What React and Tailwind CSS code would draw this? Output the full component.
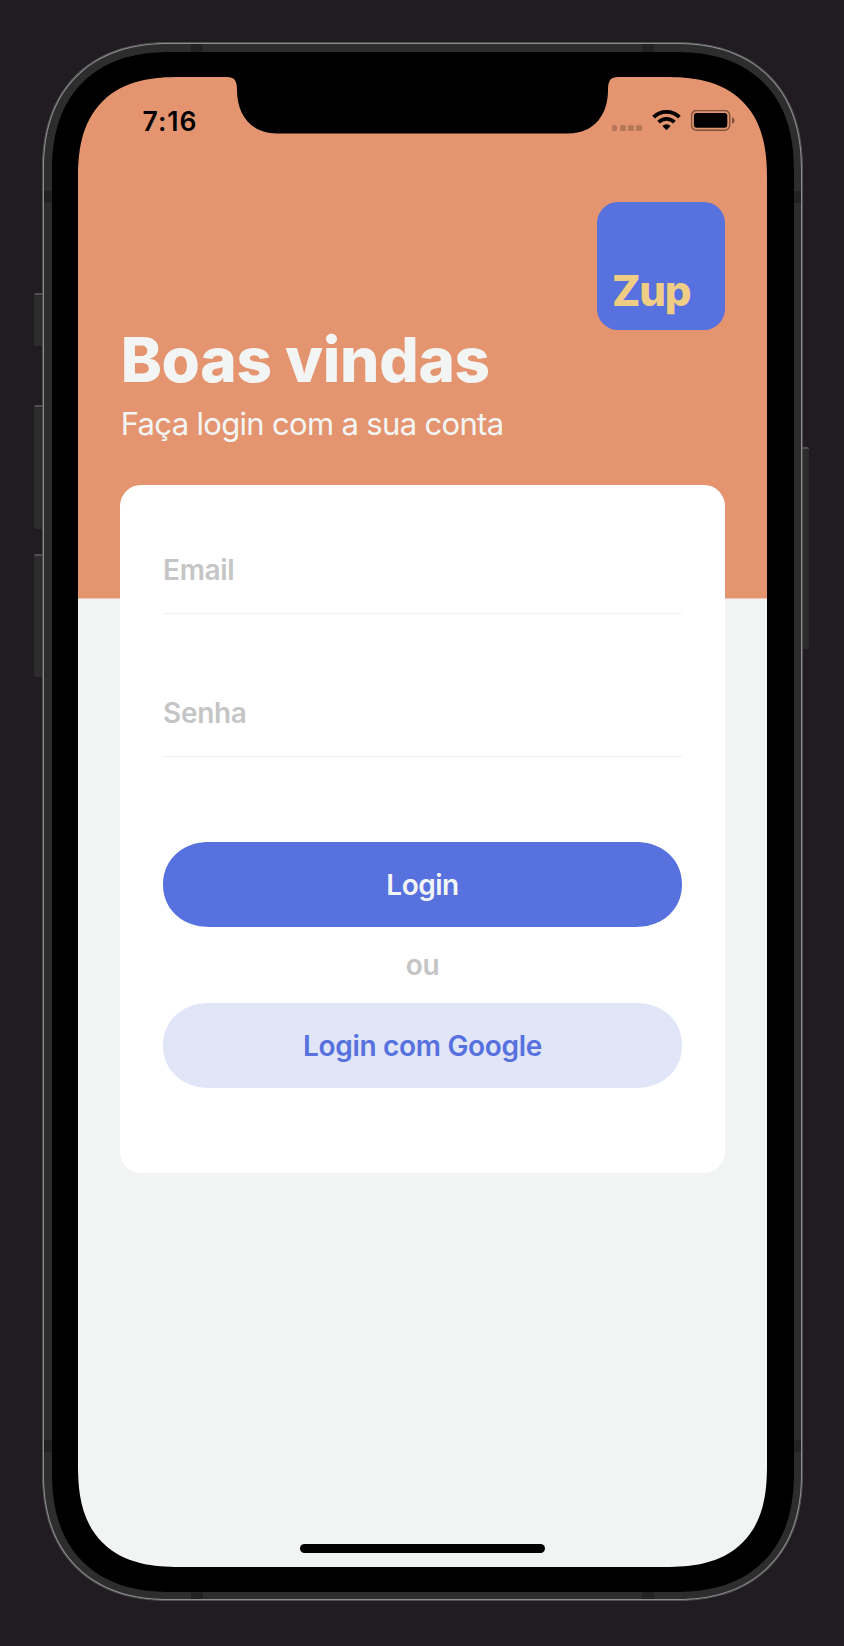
import React from "react";

function StatusBar() {
  return (
    <div className="flex h-[54px] items-end justify-between pl-[64.5px] pr-[32px]">
      <span className="text-[26.5px] leading-[32px] font-semibold text-black tracking-[1px] mb-[-6px]">7:16</span>
      <div className="flex items-end">
        <div className="flex gap-[2.6px] mr-[10px]">
          <i className="size-[5.6px] rounded-[1.5px] bg-black/20" />
          <i className="size-[5.6px] rounded-[1.5px] bg-black/20" />
          <i className="size-[5.6px] rounded-[1.5px] bg-black/20" />
          <i className="size-[5.6px] rounded-[1.5px] bg-black/20" />
        </div>
        <svg width="29" height="22" viewBox="0 0 29 22" className="mr-[10px]" fill="none" stroke="#000" strokeWidth="3.8">
          <path d="M1.6 8.2a18.2 18.2 0 0 1 25.8 0" />
          <path d="M6.6 13.2a11.2 11.2 0 0 1 15.8 0" />
          <path d="M10.4 16.9a6.2 6.2 0 0 1 8.2 0L14.5 21.2Z" fill="#000" stroke="none" />
        </svg>
        <svg width="44" height="21" viewBox="0 0 44 21">
          <rect x="0.5" y="0.5" width="38.2" height="19.8" rx="5" fill="none" stroke="#000" strokeOpacity=".45" strokeWidth="1.4" />
          <rect x="2.9" y="3" width="33.4" height="14.8" rx="2.8" fill="#000" />
          <path d="M41 7.2c3.4 1.2 3.4 5.4 0 6.6Z" fill="#000" fillOpacity=".45" />
        </svg>
      </div>
    </div>
  );
}

function Field({ label }) {
  return (
    <label className="block border-b border-[#f1f1f1] pb-[26px] text-[28px] leading-[34px] font-semibold tracking-[-0.3px] text-[#c5c5c6]">
      {label}
    </label>
  );
}

function LoginCard() {
  return (
    <form className="flex h-[688px] flex-col rounded-[21px] bg-white px-[43px] pt-[68px]">
      <div className="flex flex-col gap-[82px]">
        <Field label="Email" />
        <Field label="Senha" />
      </div>
      <div className="mt-[85px] flex flex-col gap-[21px]">
        <button type="button" className="h-[85px] rounded-[46px/42.5px] [corner-shape:superellipse(1.07)] bg-[#5771de] text-[28px] leading-[34px] font-semibold tracking-[-0.5px] text-[#f3f5f4]">
          Login
        </button>
        <p className="text-center text-[28px] leading-[34px] font-semibold tracking-[-0.4px] text-[#c5c5c6]">ou</p>
        <button type="button" className="h-[85px] rounded-[46px/42.5px] [corner-shape:superellipse(1.07)] bg-[#e0e5f7] text-[28px] leading-[34px] font-semibold tracking-[-0.3px] text-[#5771de]">
          Login com Google
        </button>
      </div>
    </form>
  );
}

function Screen() {
  return (
    <div className="relative h-[1490px] w-[689px] overflow-hidden rounded-[102px] [corner-shape:superellipse(1.34)] bg-[linear-gradient(#e4956f_521px,#efc8b5_521px,#efc8b5_522px,#f2f4f3_522px)]">
      <StatusBar />
      <main className="flex flex-col px-[42px] pt-[71px]">
        <div className="flex size-[128px] items-end self-end rounded-[21px] bg-[#5771de] pb-[13.5px] pl-[15px]">
          <span className="text-[42px] leading-[52px] font-extrabold tracking-[-1.2px] text-[#f0cd84]">Zup</span>
        </div>
        <h1 className="mt-[-7px] pl-[0.7px] text-[62px] leading-[74px] font-extrabold tracking-[-0.3px] text-[#f3f5f4]">Boas vindas</h1>
        <p className="mt-[7px] mb-[41px] pl-[0.7px] text-[31px] leading-[40px] font-normal tracking-[-0.67px] text-[#f3f5f4]">Faça login com a sua conta</p>
        <LoginCard />
      </main>
      <svg className="absolute left-[149px] top-[-1px]" width="391" height="58" viewBox="0 0 391 58">
        <path d="M0 0V1C7 1 10 4 10 14C10 38 23 57.4 50 57.4H341C368 57.4 381 38 381 14C381 4 384 1 391 1V0Z" fill="#000" />
      </svg>
      <div className="absolute bottom-[14px] left-[222px] h-[9px] w-[245px] rounded-full bg-black" />
    </div>
  );
}

function SideButton({ className }) {
  return <i className={"block w-full border-t-2 border-[#505050] bg-[#2c2c2c] " + className} />;
}

export default function App() {
  return (
    <div className="flex h-[1646px] w-[844px] bg-[#211c22] pl-[34px] pt-[42px] font-['Inter',sans-serif]">
      <div className="flex w-[8px] flex-col pt-[251px]">
        <SideButton className="h-[53px] rounded-l-[2px]" />
        <SideButton className="mt-[59px] h-[124px] rounded-l-[2px]" />
        <SideButton className="mt-[25px] h-[123px] rounded-l-[2px]" />
      </div>
      <div className="h-[1559px] w-[761px] rounded-[128px] [corner-shape:superellipse(1.2)] border border-[#4f5050] bg-[#8c8c8c] p-px">
        <div className="relative h-full w-full rounded-[126px] [corner-shape:superellipse(1.2)] bg-[#2d2d2d] pt-[8px] pl-[8px] pr-[7px] pb-[7px]">
          <div className="absolute inset-0 flex justify-between px-[147px]">
            <i className="w-[12px] bg-[#222]" />
            <i className="w-[12px] bg-[#222]" />
          </div>
          <div className="absolute inset-0 flex flex-col justify-between py-[147px]">
            <i className="h-[12px] bg-[#222]" />
            <i className="h-[12px] bg-[#222]" />
          </div>
          <div className="relative h-full w-full rounded-[120px] [corner-shape:superellipse(1.24)] bg-black pl-[26px] pt-[25px]">
            <Screen />
          </div>
        </div>
      </div>
      <div className="flex w-[6px] flex-col pt-[405px]">
        <SideButton className="h-[202px] rounded-r-[2px]" />
      </div>
    </div>
  );
}
